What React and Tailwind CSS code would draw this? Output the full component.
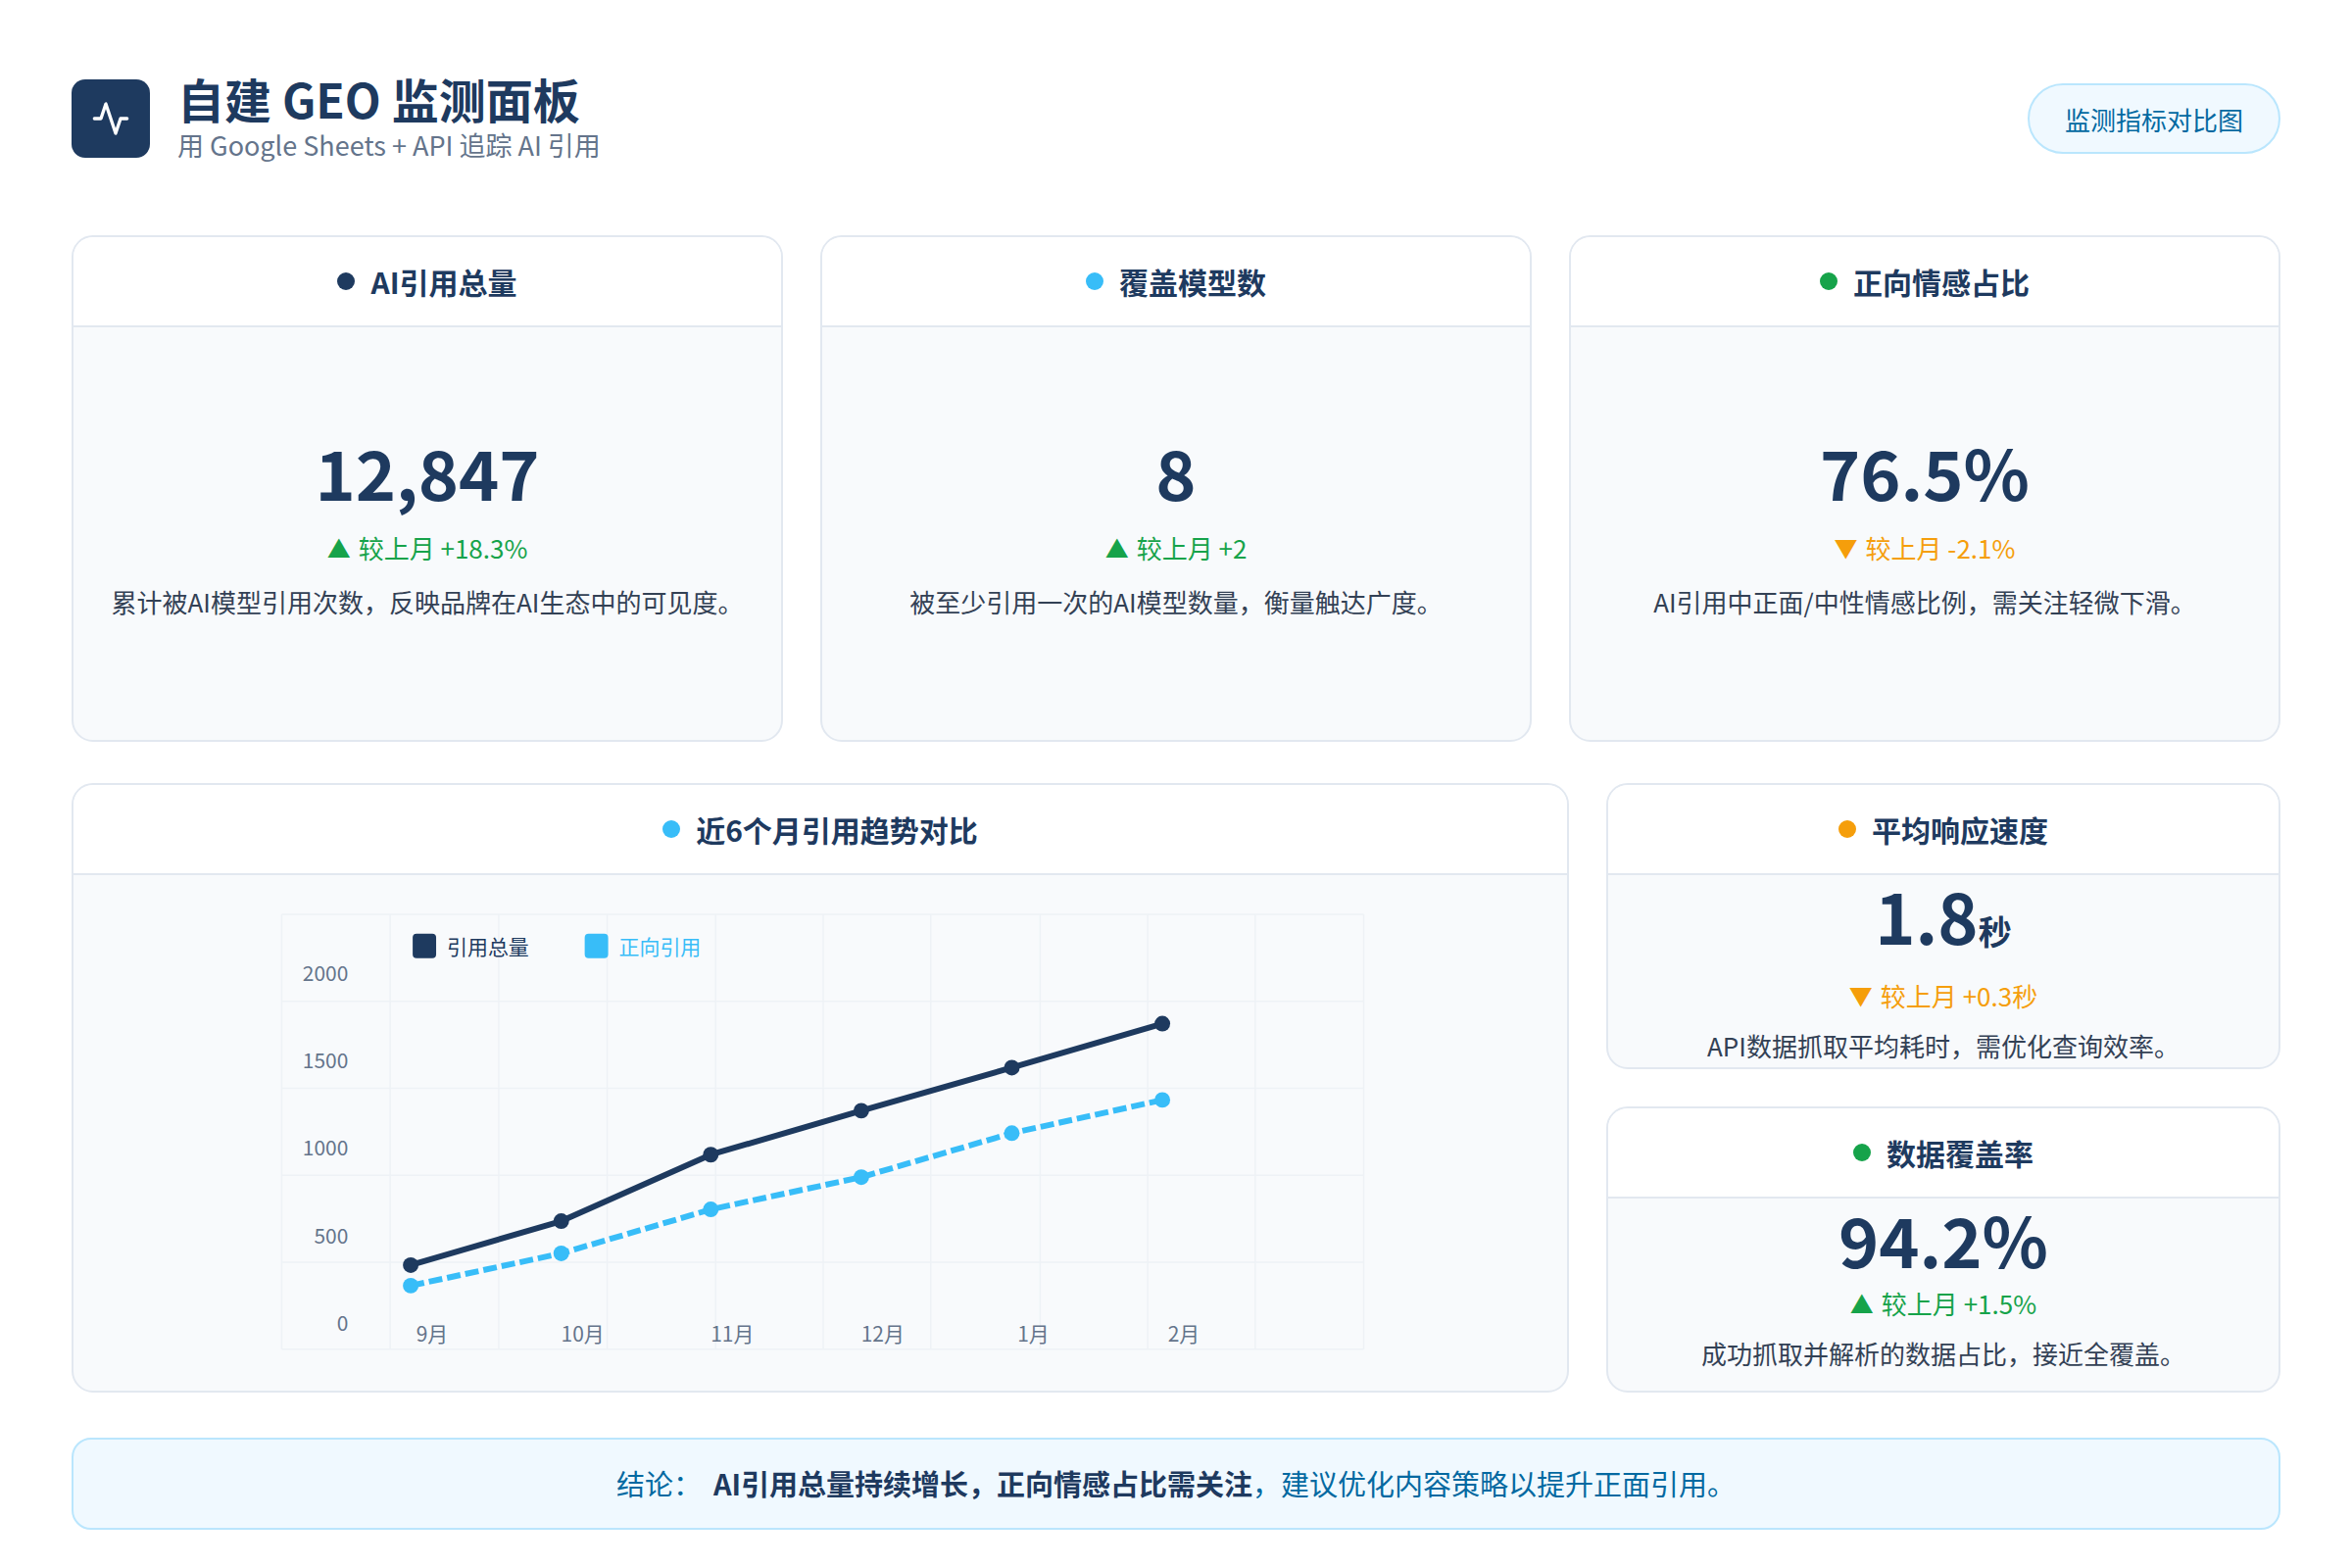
const font = { fontFamily: '"Noto Sans CJK SC", "Noto Sans", sans-serif' };

const Dot = ({ color }) => <span className={`inline-block w-[18px] h-[18px] rounded-full ${color}`} />;

const Header = ({ dot, title }) => (
  <div className="h-[92px] shrink-0 bg-white border-b-2 border-[#e2e8f0] flex items-center justify-center gap-4">
    <Dot color={dot} />
    <span className="text-[30px] font-bold text-[#1e3a5f]">{title}</span>
  </div>
);

const Up = ({ text }) => (
  <div className="text-[26px] leading-[34px] text-[#16a34a] flex items-center gap-2"><span className="text-[24px]">▲</span>{text}</div>
);
const Down = ({ text }) => (
  <div className="text-[26px] leading-[34px] text-[#f59e0b] flex items-center gap-2"><span className="text-[24px]">▼</span>{text}</div>
);

const BigCard = ({ dot, title, value, change, desc }) => (
  <div className="h-[517px] rounded-[22px] border-2 border-[#e2e8f0] overflow-hidden flex flex-col bg-[#f8fafc]">
    <Header dot={dot} title={title} />
    <div className="flex-1 flex flex-col items-center pt-[112px]">
      <div className="text-[70px] leading-none font-bold text-[#1e3a5f] mb-[26px]">{value}</div>
      {change}
      <div className="text-[26px] text-[#334155] mt-[18px]">{desc}</div>
    </div>
  </div>
);

const SmallCard = ({ dot, title, value, change, desc }) => (
  <div className="h-[292px] rounded-[22px] border-2 border-[#e2e8f0] overflow-hidden flex flex-col bg-[#f8fafc]">
    <Header dot={dot} title={title} />
    <div className="flex-1 flex flex-col items-center">
      <div className="text-[70px] leading-[82px] font-bold text-[#1e3a5f]">{value}</div>
      <div className="mt-[8px]">{change}</div>
      <div className="text-[26px] text-[#334155] mt-[14px]">{desc}</div>
    </div>
  </div>
);

const dark = [[418, 1281], [572, 1236], [725, 1168], [879, 1123], [1033, 1079], [1187, 1034]];
const light = [[418, 1302], [572, 1269], [725, 1224], [879, 1191], [1033, 1146], [1187, 1112]];
const vx = [286, 397, 508, 619, 730, 840, 950, 1062, 1172, 1282, 1393];
const hy = [922, 1011, 1100, 1189, 1278, 1367];
const months = ['9月', '10月', '11月', '12月', '1月', '2月'];

const Chart = () => (
  <svg viewBox="73 882 1528 528" className="w-full h-full" style={font}>
    {vx.map(x => <line key={x} x1={x} y1={922} x2={x} y2={1367} stroke="#eef2f6" strokeWidth="1.5" />)}
    {hy.map(y => <line key={y} x1={286} y1={y} x2={1393} y2={y} stroke="#eef2f6" strokeWidth="1.5" />)}
    {[[2000, 982], [1500, 1072], [1000, 1161], [500, 1251], [0, 1340]].map(([v, y]) => (
      <text key={v} x={354} y={y + 8} textAnchor="end" fontSize="21" fill="#64748b">{v}</text>
    ))}
    {months.map((m, i) => (
      <text key={m} x={dark[i][0] + 22} y={1359} textAnchor="middle" fontSize="21" fill="#64748b">{m}</text>
    ))}
    <rect x={420} y={942} width={24} height={25} rx={4} fill="#1e3a5f" />
    <text x={455} y={963} fontSize="21" fill="#1e3a5f">引用总量</text>
    <rect x={596} y={942} width={24} height={25} rx={4} fill="#38bdf8" />
    <text x={631} y={963} fontSize="21" fill="#38bdf8">正向引用</text>
    <polyline points={dark.map(p => p.join(',')).join(' ')} fill="none" stroke="#1e3a5f" strokeWidth="6" strokeLinejoin="round" />
    <polyline points={light.map(p => p.join(',')).join(' ')} fill="none" stroke="#38bdf8" strokeWidth="6" strokeDasharray="14 5" strokeLinejoin="round" />
    {dark.map(([x, y]) => <circle key={x} cx={x} cy={y} r={8} fill="#1e3a5f" />)}
    {light.map(([x, y]) => <circle key={x} cx={x} cy={y} r={8} fill="#38bdf8" />)}
  </svg>
);

export default function App() {
  return (
    <div className="w-[2400px] h-[1600px] bg-white px-[73px] pt-[76px]" style={font}>
      <div className="flex items-start justify-between">
        <div className="flex items-center gap-[28px]">
          <div className="w-[80px] h-[80px] rounded-[14px] bg-[#1e3a5f] flex items-center justify-center">
            <svg width="40" height="40" viewBox="0 0 24 24" fill="none" stroke="white" strokeWidth="2" strokeLinecap="round" strokeLinejoin="round">
              <path d="M22 12h-4l-3 9L9 3l-3 9H2" />
            </svg>
          </div>
          <div className="-mt-[6px]">
            <div className="text-[48px] leading-[60px] font-bold text-[#1e3a5f]">自建 GEO 监测面板</div>
            <div className="text-[27px] leading-[36px] text-[#64748b]">用 Google Sheets + API 追踪 AI 引用</div>
          </div>
        </div>
        <div className="mt-[9px] h-[72px] px-[36px] rounded-full border-2 border-[#bae6fd] bg-[#f0f9ff] flex items-center text-[26px] text-[#0369a1]">监测指标对比图</div>
      </div>

      <div className="grid grid-cols-3 gap-[38px] mt-[74px]">
        <BigCard dot="bg-[#1e3a5f]" title="AI引用总量" value="12,847" change={<Up text="较上月 +18.3%" />} desc="累计被AI模型引用次数，反映品牌在AI生态中的可见度。" />
        <BigCard dot="bg-[#38bdf8]" title="覆盖模型数" value="8" change={<Up text="较上月 +2" />} desc="被至少引用一次的AI模型数量，衡量触达广度。" />
        <BigCard dot="bg-[#16a34a]" title="正向情感占比" value="76.5%" change={<Down text="较上月 -2.1%" />} desc="AI引用中正面/中性情感比例，需关注轻微下滑。" />
      </div>

      <div className="grid grid-cols-[1528px_1fr] gap-[38px] mt-[42px]">
        <div className="h-[622px] rounded-[22px] border-2 border-[#e2e8f0] overflow-hidden flex flex-col bg-[#f8fafc]">
          <Header dot="bg-[#38bdf8]" title="近6个月引用趋势对比" />
          <div className="flex-1"><Chart /></div>
        </div>
        <div className="flex flex-col gap-[38px]">
          <SmallCard dot="bg-[#f59e0b]" title="平均响应速度" value={<>1.8<span className="text-[34px]">秒</span></>} change={<Down text="较上月 +0.3秒" />} desc="API数据抓取平均耗时，需优化查询效率。" />
          <SmallCard dot="bg-[#16a34a]" title="数据覆盖率" value="94.2%" change={<Up text="较上月 +1.5%" />} desc="成功抓取并解析的数据占比，接近全覆盖。" />
        </div>
      </div>

      <div className="mt-[46px] h-[94px] rounded-[20px] border-2 border-[#bae6fd] bg-[#f0f9ff] flex items-center justify-center text-[29px] text-[#0369a1]">
        结论：<span className="font-bold text-[#1e3a5f] ml-3">AI引用总量持续增长，正向情感占比需关注</span>，建议优化内容策略以提升正面引用。
      </div>
    </div>
  );
}
